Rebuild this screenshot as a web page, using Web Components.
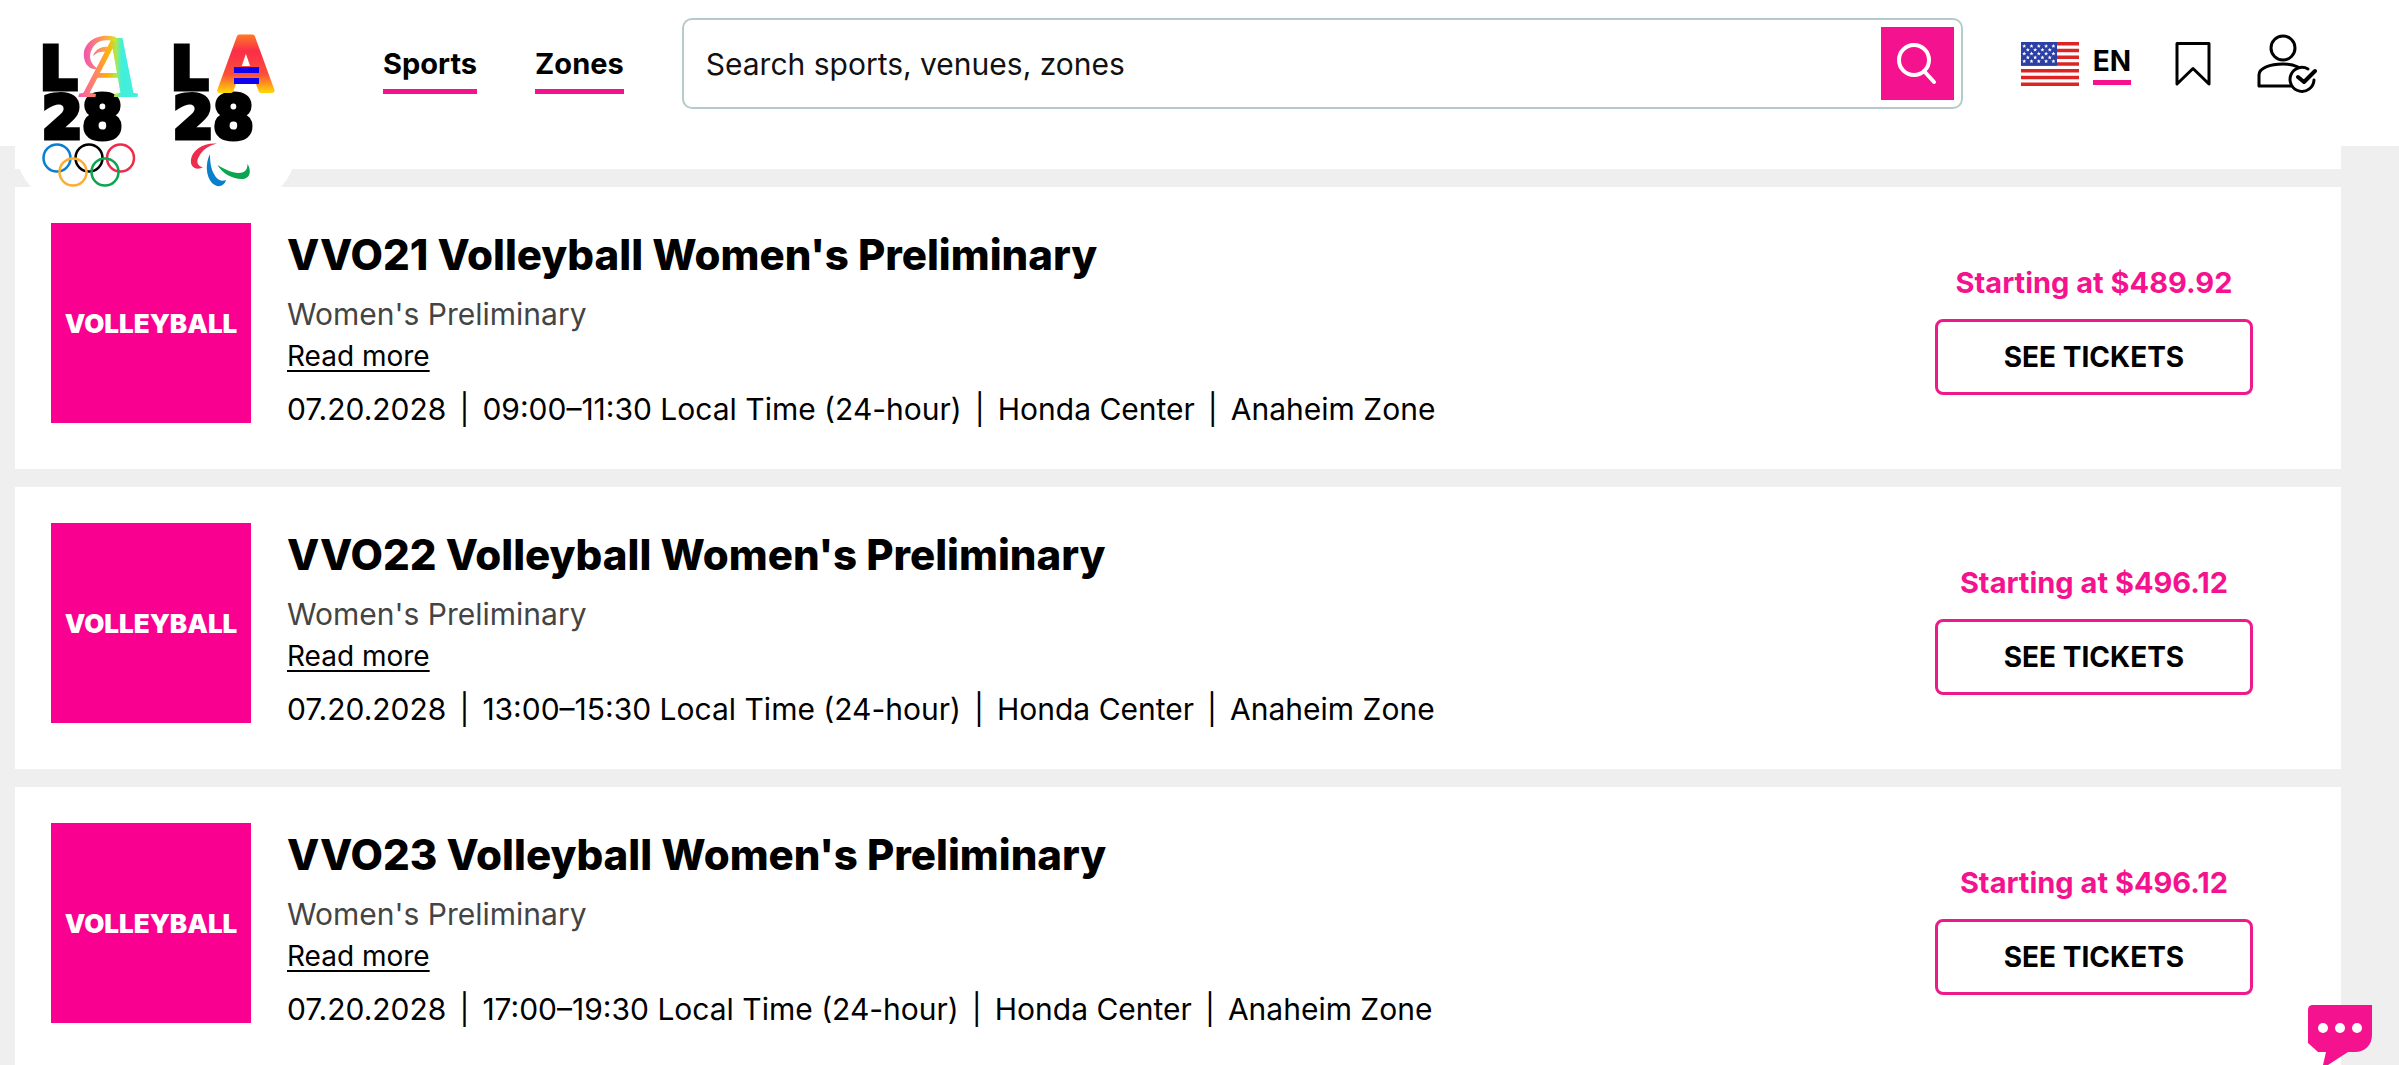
<!DOCTYPE html>
<html lang="en">
<head>
    <meta charset="UTF-8">
    <meta name="viewport" content="width=device-width, initial-scale=1.0">
    <title>LA28 Tickets</title>
    <style>
        :root {
            --pink: #f5128f;
            --tile: #fa0090;
            --grey: #efefef;
        }
        body {
            margin: 0;
            background: var(--grey);
            color: #000;
            font-family: Inter, "Liberation Sans", sans-serif;
        }
    </style>
</head>
<body>
    <site-header>
        <nav-link slot="nav" href="#sports">Sports</nav-link>
        <nav-link slot="nav" href="#zones">Zones</nav-link>
    </site-header>

    <event-list>
        <event-card code="VVO21" price="$489.92" time="09:00–11:30"></event-card>
        <event-card code="VVO22" price="$496.12" time="13:00–15:30"></event-card>
        <event-card code="VVO23" price="$496.12" time="17:00–19:30"></event-card>
    </event-list>

    <chat-button></chat-button>

    <template id="site-header">
        <style>
            :host {
                display: flex;
                align-items: center;
                box-sizing: border-box;
                height: 146px;
                padding: 0 82px 19px 15px;
                background: #fff;
                position: sticky;
                top: 0;
                z-index: 2;
            }
            nav {
                display: flex;
                gap: 58px;
                margin: 0 58px 0 86px;
            }
            la-logos {
                align-self: flex-start;
            }
            search-box {
                flex: 1;
                margin-right: 58px;
            }
            language-switch {
                margin-right: 44px;
            }
            button {
                display: flex;
                padding: 0;
                border: 0;
                background: none;
            }
            .saved {
                margin-right: 46px;
            }
        </style>
        <la-logos></la-logos>
        <nav><slot name="nav"></slot></nav>
        <search-box></search-box>
        <language-switch></language-switch>
        <button class="saved" aria-label="Saved events">
            <svg width="36" height="46" viewBox="0 0 36 46" fill="none" stroke="#000" stroke-width="3" stroke-linejoin="round">
                <path d="M2 2.5H34V43L18 27.5 2 43Z"/>
            </svg>
        </button>
        <button aria-label="My account">
            <svg width="60" height="60" viewBox="0 0 60 60" fill="none" stroke="#000" stroke-width="3" stroke-linecap="round" stroke-linejoin="round">
                <circle cx="26" cy="14" r="12"/>
                <path d="M34 52H2V41C2 34 13 30 26 30c6 0 11 1 15 3"/>
                <path d="M51 35a12 12 0 1 0 6 11"/>
                <path d="M41 43l6 5 11-11" stroke-width="4"/>
            </svg>
        </button>
    </template>

    <template id="la-logos">
        <style>
            :host {
                display: block;
                width: 282px;
                height: 127px;
            }
            a {
                display: block;
                height: 206px;
                border-radius: 0 0 60px 60px;
                background: #fff;
            }
            svg {
                display: block;
            }
            text {
                font-family: "DejaVu Sans", sans-serif;
                font-weight: 700;
                font-size: 58px;
                stroke: #000;
                stroke-width: 5px;
            }
            .olympic-a {
                font: italic 700 88px "Liberation Serif", serif;
                stroke: none;
            }
            .paralympic-a {
                font: 700 78px "Liberation Sans", sans-serif;
                text-anchor: middle;
                stroke: url(#sunset);
                stroke-linejoin: round;
            }
        </style>
        <a href="#home" aria-label="LA28 home">
            <!-- the viewBox starts at the plate's left edge -->
            <svg width="282" height="206" viewBox="15 0 282 206">
                <defs>
                    <linearGradient id="rainbow">
                        <stop offset="0" stop-color="#f45ab4"/>
                        <stop offset=".3" stop-color="#ff8a5c"/>
                        <stop offset=".48" stop-color="#ffb400"/>
                        <stop offset=".6" stop-color="#a8ea50"/>
                        <stop offset=".68" stop-color="#42efdc"/>
                        <stop offset="1" stop-color="#42efdc"/>
                    </linearGradient>
                    <linearGradient id="curl" gradientUnits="userSpaceOnUse" x1="84" y1="0" x2="116" y2="0">
                        <stop offset="0" stop-color="#f252b4"/>
                        <stop offset=".6" stop-color="#ff9a50"/>
                        <stop offset="1" stop-color="#d8e820"/>
                    </linearGradient>
                    <linearGradient id="sunset" gradientUnits="userSpaceOnUse" x1="0" y1="31" x2="0" y2="98">
                        <stop offset="0" stop-color="#ff8a20"/>
                        <stop offset=".3" stop-color="#fb2d48"/>
                        <stop offset=".65" stop-color="#fc5038"/>
                        <stop offset=".95" stop-color="#ffe600"/>
                    </linearGradient>
                </defs>

                <text x="40" y="89">L</text>
                <text x="42" y="138">28</text>
                <text x="171" y="89">L</text>
                <text x="173" y="138">28</text>

                <text class="olympic-a" x="83" y="96" fill="url(#rainbow)">A</text>
                <g fill="url(#curl)">
                    <path d="M116 37C97 32 82 43 84 57c1 9 7 13 14 12-8-5-10-13-6-20 4-8 12-11 24-7Z"/>
                    <path d="M93 56c2-6 8-10 15-9l-2 5c-5-1-9 0-13 4Z"/>
                </g>

                <text class="paralympic-a" x="246" y="91" fill="url(#sunset)">A</text>
                <path fill="#1000f0" d="M234 67h25v6h-25zM234 78h25v6h-25z"/>

                <g fill="none" stroke-width="2.5">
                    <circle cx="57" cy="158" r="13.5" stroke="#0a7fd0"/>
                    <circle cx="89" cy="158" r="13.5" stroke="#000"/>
                    <circle cx="120.5" cy="158" r="13.5" stroke="#ee2c4c"/>
                    <circle cx="73" cy="172" r="13.5" stroke="#fbae32"/>
                    <circle cx="105" cy="172" r="13.5" stroke="#0aa550"/>
                </g>

                <path fill="#ee2c4c" d="M217 143.5c-14-1-25 7-26 16-1 8 5 11 12 8-6-2-7-6-4-11 3-6 9-11 18-13Z"/>
                <path fill="#0a80cc" d="M210 154c-5 10-4 22 2 29 5 5 12 4 14-3-5 2-9 0-12-6-3-5-4-12-4-20Z"/>
                <path fill="#0aa550" d="M217.5 165c5 9 17 15 26 14 7-1 8-9 4-15 0 6-3 9-9 9-7 0-14-4-21-8Z"/>
            </svg>
        </a>
    </template>

    <template id="nav-link">
        <style>
            :host {
                display: block;
            }
            a {
                display: block;
                border-top: 5px solid transparent;
                border-bottom: 5px solid var(--pink);
                color: inherit;
                font-size: 29px;
                font-weight: 700;
                line-height: 50px;
                text-decoration: none;
            }
        </style>
        <a><slot></slot></a>
    </template>

    <template id="search-box">
        <style>
            :host {
                display: block;
            }
            form {
                display: flex;
                border: 2px solid #b5cbc9;
                border-radius: 10px;
                padding: 7px;
            }
            input {
                flex: 1;
                min-width: 0;
                padding: 0 15px;
                border: 0;
                outline: 0;
                background: none;
                color: #000;
                font: 400 30px Inter, "Liberation Sans", sans-serif;
            }
            input::placeholder {
                color: #111;
                opacity: 1;
            }
            button {
                display: flex;
                align-items: center;
                justify-content: center;
                width: 73px;
                height: 73px;
                padding: 0;
                border: 0;
                background: var(--pink);
            }
        </style>
        <form role="search">
            <input type="text" placeholder="Search sports, venues, zones" aria-label="Search sports, venues, zones">
            <button type="button" aria-label="Search">
                <svg width="40" height="42" viewBox="0 0 40 42" fill="none" stroke="#fff" stroke-width="4" stroke-linecap="round">
                    <circle cx="17" cy="17" r="15"/>
                    <path d="M27 28l10 11"/>
                </svg>
            </button>
        </form>
    </template>

    <template id="language-switch">
        <style>
            :host {
                display: block;
            }
            button {
                display: flex;
                align-items: center;
                gap: 14px;
                padding: 0;
                border: 0;
                background: none;
                color: #000;
                font: 700 28px/38px Inter, "Liberation Sans", sans-serif;
            }
            span {
                border-bottom: 5px solid var(--pink);
            }
        </style>
        <button aria-label="Language: EN">
            <svg width="58" height="44" viewBox="0 0 58 44">
                <path fill="#fff" d="M0 0h58v44H0z"/>
                <g class="stripes" stroke="#dc2424" stroke-width="3.4"></g>
                <path fill="#2c3fa4" d="M0 0h36v23.7H0z"/>
                <g class="stars" fill="#fff"></g>
            </svg>
            <span>EN</span>
        </button>
    </template>

    <template id="event-list">
        <style>
            :host {
                display: flex;
                flex-direction: column;
                gap: 18px;
                margin: 0 58px 0 15px;
            }
            /* tail end of the card that is scrolled under the header */
            .above {
                height: 23px;
                background: #fff;
            }
        </style>
        <div class="above"></div>
        <slot></slot>
    </template>

    <template id="event-card">
        <style>
            :host {
                display: flex;
                gap: 36px;
                padding: 36px 88px 38px 36px;
                background: #fff;
            }
            .tile {
                display: flex;
                align-items: center;
                justify-content: center;
                width: 200px;
                height: 200px;
                background: var(--tile);
                color: #fff;
                font-size: 26px;
                font-weight: 900;
            }
            .info {
                flex: 1;
            }
            h2 {
                margin: 0;
                font-size: 42px;
                font-weight: 800;
                line-height: 64px;
            }
            p {
                margin: 0;
            }
            .stage {
                color: #444;
                font-size: 30px;
                line-height: 54px;
            }
            a {
                display: block;
                width: fit-content;
                color: #000;
                font-size: 28px;
                line-height: 30px;
                text-decoration-thickness: 2px;
                text-underline-offset: 4px;
            }
            .when {
                display: flex;
                gap: 13px;
                margin-top: 16px;
                font-size: 30px;
                line-height: 44px;
            }
            .buy {
                display: flex;
                flex-direction: column;
                justify-content: center;
                gap: 16px;
                width: 318px;
                padding-top: 4px;
            }
            .price {
                color: var(--pink);
                font-size: 29px;
                font-weight: 700;
                line-height: 40px;
                text-align: center;
            }
            button {
                height: 76px;
                border: 3px solid #ee1a8c;
                border-radius: 8px;
                background: #fff;
                color: #000;
                font: 700 28px Inter, "Liberation Sans", sans-serif;
            }
        </style>
        <div class="tile">VOLLEYBALL</div>
        <div class="info">
            <h2></h2>
            <p class="stage">Women's Preliminary</p>
            <a href="#more">Read more</a>
            <p class="when">
                <span>07.20.2028</span><span>|</span>
                <span class="time"></span><span>|</span>
                <span>Honda Center</span><span>|</span>
                <span>Anaheim Zone</span>
            </p>
        </div>
        <div class="buy">
            <div class="price"></div>
            <button>SEE TICKETS</button>
        </div>
    </template>

    <template id="chat-button">
        <style>
            :host {
                position: fixed;
                right: 27px;
                bottom: 0;
                z-index: 3;
            }
            button {
                display: flex;
                padding: 0;
                border: 0;
                background: none;
            }
        </style>
        <button aria-label="Open chat">
            <svg width="64" height="60" viewBox="0 0 64 60">
                <path fill="var(--pink)" d="M5 0H64V30C64 40 57 47 47 47H40L20 60H15L18 47H10L0 38V5Q0 0 5 0Z"/>
                <g fill="#fff">
                    <circle cx="15" cy="23" r="5"/>
                    <circle cx="32" cy="23" r="5"/>
                    <circle cx="49" cy="23" r="5"/>
                </g>
            </svg>
        </button>
    </template>

    <script>
        // every element clones the template that has its own tag name as id
        class BaseElement extends HTMLElement {
            connectedCallback() {
                if (this.shadowRoot) return;
                const template = document.getElementById(this.localName);
                this.attachShadow({mode: 'open'});
                this.shadowRoot.appendChild(template.content.cloneNode(true));
                this.fill(this.shadowRoot);
            }

            fill(root) {}
        }

        class SiteHeader extends BaseElement {}
        class LaLogos extends BaseElement {}
        class SearchBox extends BaseElement {}
        class EventList extends BaseElement {}
        class ChatButton extends BaseElement {}

        class NavLink extends BaseElement {
            fill(root) {
                root.querySelector('a').href = this.getAttribute('href');
            }
        }

        class LanguageSwitch extends BaseElement {
            fill(root) {
                let stripes = '';
                for (let i = 0; i < 7; i++) {
                    const y = 1.7 + i * 6.77;
                    stripes += `<path d="M0 ${y}H58"/>`;
                }
                root.querySelector('.stripes').innerHTML = stripes;

                let stars = '';
                for (let row = 0; row < 5; row++) {
                    const odd = row % 2;
                    for (let col = 0; col < 5 - odd; col++) {
                        const x = 3.2 + col * 7.3 + odd * 3.65;
                        const y = 4 + row * 3.8;
                        stars += `<path transform="translate(${x} ${y})" d="M0-2L.6-.6 2-.6 .9.4 1.3 1.8 0 1-1.3 1.8-.9.4-2-.6-.6-.6Z"/>`;
                    }
                }
                root.querySelector('.stars').innerHTML = stars;
            }
        }

        class EventCard extends BaseElement {
            fill(root) {
                root.querySelector('h2').textContent = `${this.getAttribute('code')} Volleyball Women's Preliminary`;
                root.querySelector('.time').textContent = `${this.getAttribute('time')} Local Time (24-hour)`;
                root.querySelector('.price').textContent = `Starting at ${this.getAttribute('price')}`;
            }
        }

        customElements.define('site-header', SiteHeader);
        customElements.define('la-logos', LaLogos);
        customElements.define('nav-link', NavLink);
        customElements.define('search-box', SearchBox);
        customElements.define('language-switch', LanguageSwitch);
        customElements.define('event-list', EventList);
        customElements.define('event-card', EventCard);
        customElements.define('chat-button', ChatButton);
    </script>
</body>
</html>
